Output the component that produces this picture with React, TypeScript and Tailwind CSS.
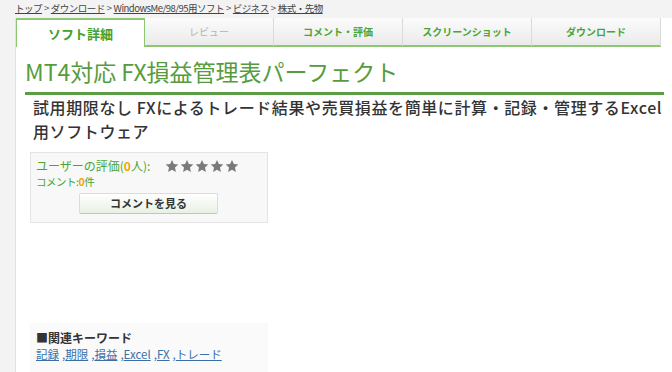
import React from "react"

const jp = "font-['Noto_Sans_CJK_JP','Noto_Sans',sans-serif]"

const crumbs = ["トップ", "ダウンロード", "WindowsMe/98/95用ソフト", "ビジネス", "株式・先物"]
const tabs = ["レビュー", "コメント・評価", "スクリーンショット", "ダウンロード"]
const keywords = ["記録", "期限", "損益", "Excel", "FX", "トレード"]

const Star = () => (
  <svg width="14" height="14" viewBox="0 0 24 24">
    <path
      d="M12 1.5l3.2 7.1 7.6.8-5.7 5.2 1.6 7.6L12 18.3l-6.7 3.9 1.6-7.6-5.7-5.2 7.6-.8z"
      fill="#7a7a7a"
    />
  </svg>
)

const App = () => {
  return (
    <div className={`w-[672px] h-[372px] overflow-hidden bg-[#f3f3f3] ${jp}`}>
      {/* breadcrumb */}
      <div className="h-[18px] pl-[15px] pt-[1px] text-[9.5px] leading-[14px] text-[#555] tracking-[-0.5px]">
        {crumbs.map((c, i) => (
          <span key={c}>
            <a className="underline text-[#444]">{c}</a>
            {i < crumbs.length - 1 && <span className="mx-[2px]">&gt;</span>}
          </span>
        ))}
      </div>

      <div className="ml-[15px] h-[354px] border-l border-[#e2e2e2] bg-white">
        {/* tabs */}
        <div className="flex h-[29px]">
          <div className="w-[129px] h-[29px] flex items-center justify-center bg-white border-t-2 border-x border-[#8cc873] text-[13px] font-bold text-[#45a02e]">
            ソフト詳細
          </div>
          {tabs.map((t, i) => (
            <div
              key={t}
              className={`w-[129px] h-[29px] flex items-center justify-center bg-gradient-to-b from-[#fbfbfb] to-[#ebebeb] border-r border-[#dadada] border-b-2 border-b-[#8cc873] text-[10px] ${
                i === 0 ? "text-[#b4b4b4]" : "font-bold text-[#4aa535]"
              }`}
            >
              {t}
            </div>
          ))}
        </div>

        {/* title */}
        <h1 className="ml-[9px] mt-[10px] w-[639px] pb-[7px] border-b-[3px] border-[#5a9d44] text-[23px] leading-[28px] text-[#569c3e]">
          MT4対応 FX損益管理表パーフェクト
        </h1>

        <p className="ml-[17px] text-[16px] leading-[24px] font-medium text-[#333] tracking-[0.6px]">
          試用期限なし FXによるトレード結果や売買損益を簡単に計算・記録・管理するExcel
          <br />
          用ソフトウェア
        </p>

        {/* rating */}
        <div className="ml-[14px] mt-[9px] w-[238px] h-[71px] bg-[#f8f8f8] border border-[#e4e4e4] pl-[5px] pt-[5px]">
          <div className="flex items-center h-[16px] text-[12px] text-[#4aa535]">
            <span className="w-[129px]">
              ユーザーの評価(<span className="text-[#f0a400] font-bold">0</span>人):
            </span>
            <span className="flex gap-[1px]">
              <Star />
              <Star />
              <Star />
              <Star />
              <Star />
            </span>
          </div>
          <div className="h-[16px] text-[10.5px] leading-[16px] text-[#4aa535] tracking-[-0.5px]">
            コメント:<span className="text-[#f0a400] font-bold">0</span>件
          </div>
          <div className="mt-[3px] ml-[43px] w-[139px] h-[21px] flex items-center justify-center rounded-[2px] border border-[#dcdcdc] border-b-[#b5cfa8] bg-gradient-to-b from-white to-[#e9f0e4] text-[11px] font-bold text-[#333]">
            コメントを見る
          </div>
        </div>

        {/* keywords */}
        <div className="ml-[14px] mt-[100px] w-[238px] h-[60px] bg-[#fafafa] pl-[6px] pt-[7px]">
          <div className="text-[12px] leading-[16px] font-bold text-[#333]">■関連キーワード</div>
          <div className="text-[11.5px] leading-[16px] text-[#3a6fa8]">
            {keywords.map((k, i) => (
              <span key={k}>
                {i > 0 && <span className="ml-[3px]">,</span>}
                <a className="underline">{k}</a>
              </span>
            ))}
          </div>
        </div>
      </div>
    </div>
  )
}

export default App
